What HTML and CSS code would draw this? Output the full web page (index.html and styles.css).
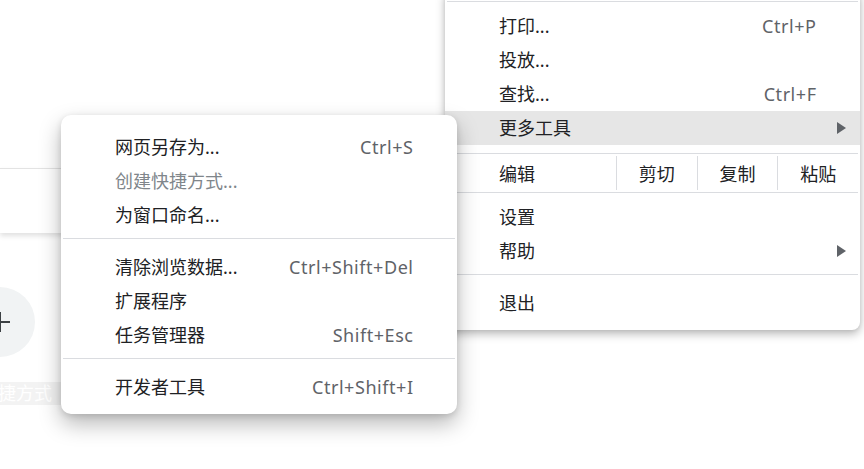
FILE: index.html
```html
<!DOCTYPE html>
<html lang="zh-CN">
<head>
<meta charset="utf-8">
<title>菜单</title>
<link rel="stylesheet" href="styles.css">
</head>
<body>
<div class="page">
  <div class="backdrop">
    <div class="suggest-card"></div>
    <div class="tile">
      <svg class="plus" width="24" height="24" viewBox="0 0 24 24"><path d="M12 2v20M2 12h20" stroke="#3c4043" stroke-width="2" fill="none"/></svg>
    </div>
    <div class="tile-label">捷方式</div>
  </div>

  <div class="menu main-menu">
    <div class="sep sep-top"></div>
    <div class="row"><span class="label">打印...</span><span class="accel">Ctrl+P</span></div>
    <div class="row"><span class="label">投放...</span></div>
    <div class="row"><span class="label">查找...</span><span class="accel">Ctrl+F</span></div>
    <div class="row row-hl"><span class="label">更多工具</span><span class="arrow"></span></div>
    <div class="edit-row">
      <span class="edit-label">编辑</span>
      <span class="edit-cell">剪切</span>
      <span class="edit-cell">复制</span>
      <span class="edit-cell">粘贴</span>
    </div>
    <div class="row row-after-edit"><span class="label">设置</span></div>
    <div class="row"><span class="label">帮助</span><span class="arrow"></span></div>
    <div class="sep"></div>
    <div class="row"><span class="label">退出</span></div>
  </div>

  <div class="menu sub-menu">
    <div class="row"><span class="label">网页另存为...</span><span class="accel">Ctrl+S</span></div>
    <div class="row disabled"><span class="label">创建快捷方式...</span></div>
    <div class="row"><span class="label">为窗口命名...</span></div>
    <div class="sep"></div>
    <div class="row"><span class="label">清除浏览数据...</span><span class="accel">Ctrl+Shift+Del</span></div>
    <div class="row"><span class="label">扩展程序</span></div>
    <div class="row"><span class="label">任务管理器</span><span class="accel">Shift+Esc</span></div>
    <div class="sep"></div>
    <div class="row"><span class="label">开发者工具</span><span class="accel">Ctrl+Shift+I</span></div>
  </div>
</div>
</body>
</html>
```

FILE: styles.css
```css
* { box-sizing: border-box; }

html, body {
  margin: 0;
  padding: 0;
  background: #ffffff;
}

body {
  font-family: "Noto Sans", "Noto Sans CJK SC", sans-serif;
  font-size: 18px;
  color: #202124;
}

.page {
  position: relative;
  width: 864px;
  height: 469px;
  overflow: hidden;
  background: #ffffff;
}

/* background content */
.backdrop {
  display: flex;
  flex-direction: column;
  align-items: flex-start;
}

.suggest-card {
  margin-top: 168px;
  width: 445px;
  height: 65px;
  background: #ffffff;
  border-top: 1px solid #e3e3e3;
  box-shadow: 0 3px 5px rgba(0, 0, 0, 0.12);
}

.tile {
  margin-top: 54px;
  margin-left: -35px;
  width: 70px;
  height: 70px;
  border-radius: 50%;
  background: #f1f3f4;
  display: flex;
  align-items: center;
  justify-content: center;
}

.plus { display: block; }

.tile-label {
  margin-top: 25px;
  width: 120px;
  height: 23px;
  line-height: 23px;
  margin-left: -2px;
  background: #f3f3f3;
  color: #ffffff;
  font-size: 18px;
  white-space: nowrap;
}

/* menus */
.menu {
  position: absolute;
  background: #ffffff;
}

.main-menu {
  left: 445px;
  top: -8px;
  width: 415px;
  padding-bottom: 10px;
  border-radius: 0 0 8px 8px;
  box-shadow: 0 4px 10px rgba(0, 0, 0, 0.28), 0 0 4px rgba(0, 0, 0, 0.08);
}

.sub-menu {
  left: 61px;
  top: 115px;
  width: 396px;
  padding-top: 15px;
  padding-bottom: 10px;
  border-radius: 10px;
  box-shadow: 0 10px 22px rgba(0, 0, 0, 0.28), 0 2px 6px rgba(0, 0, 0, 0.12);
}

.row {
  display: flex;
  align-items: center;
  height: 34px;
  line-height: 34px;
  padding: 0 44px 0 54px;
  white-space: nowrap;
}

.row .label { flex: 1; }

.row .accel {
  color: #5f6368;
  letter-spacing: 0.55px;
  margin-right: -0.55px;
}

.row.disabled .label { color: #80868b; }

.row-hl { background: #e6e6e6; }

.arrow {
  width: 0;
  height: 0;
  margin-right: -30px;
  border-top: 6px solid transparent;
  border-bottom: 6px solid transparent;
  border-left: 9px solid #5f6368;
}

.sep {
  height: 1px;
  margin: 6px 2px 11px;
  background: #dadce0;
}

.sep.sep-top {
  margin: 9px 2px 7px;
}

.edit-row {
  display: flex;
  align-items: stretch;
  height: 40px;
  margin: 8px 2px 0;
  border-top: 1px solid #dadce0;
  border-bottom: 1px solid #dadce0;
}

.edit-label {
  width: 169px;
  padding-left: 52px;
  display: flex;
  align-items: center;
}

.edit-cell {
  flex: 1;
  margin: 2px 0;
  border-left: 1px solid #dadce0;
  display: flex;
  align-items: center;
  justify-content: center;
}

.row-after-edit { margin-top: 7px; }
```
